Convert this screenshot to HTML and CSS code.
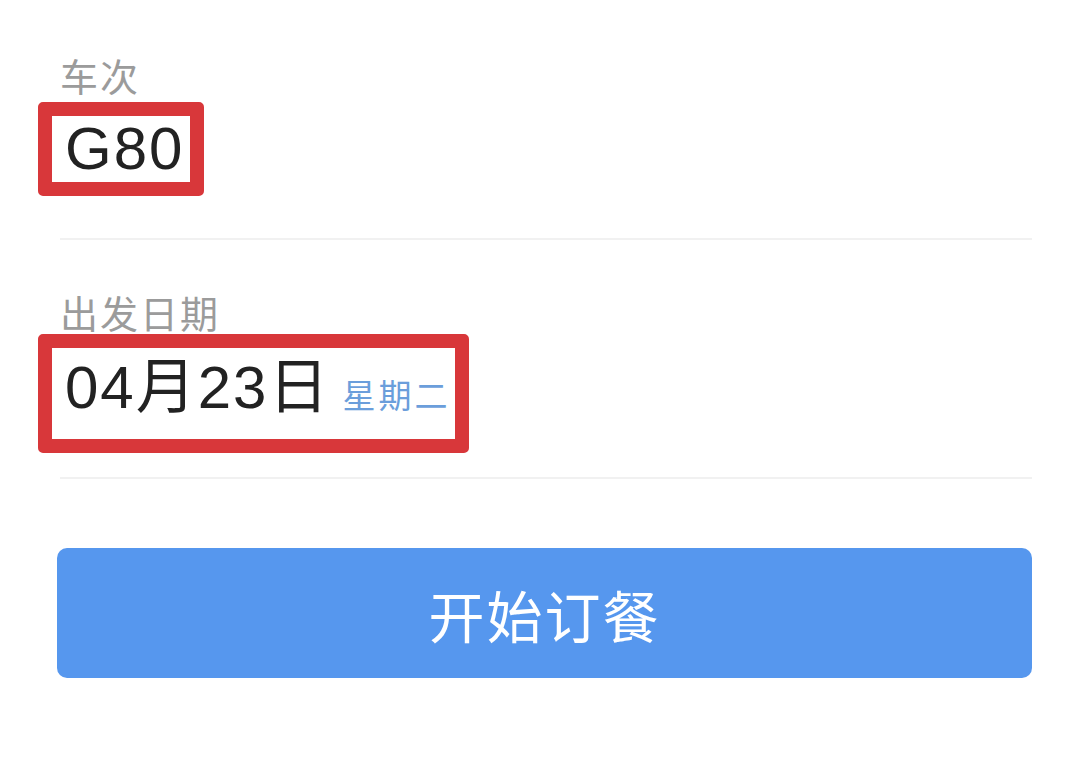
FILE: index.html
```html
<!DOCTYPE html>
<html lang="zh-CN">
<head>
<meta charset="utf-8">
<link rel="stylesheet" href="styles.css">
</head>
<body>
<div class="page">
  <div class="field field-train">
    <div class="label">车次</div>
    <div class="value-box box-train"><span class="value">G80</span></div>
  </div>
  <div class="field field-date">
    <div class="label">出发日期</div>
    <div class="value-box box-date"><span class="value">04月23日</span><span class="weekday">星期二</span></div>
  </div>
  <button class="order-btn">开始订餐</button>
</div>
</body>
</html>
```
FILE: styles.css
```css
html, body {
  margin: 0;
  padding: 0;
  background: #ffffff;
}
body {
  font-family: "Liberation Sans", "Noto Sans CJK SC", sans-serif;
}
.page {
  padding: 53px 48px 0 57px;
}
.field {
  margin-left: 3px;
  border-bottom: 2px solid #f1f1f1;
}
.field-train {
  padding-bottom: 42px;
}
.field-date {
  padding-top: 50px;
  padding-bottom: 24px;
}
.label {
  font-family: "Noto Sans CJK SC", sans-serif;
  font-size: 38px;
  line-height: 44px;
  letter-spacing: 2px;
  color: #9b9b9b;
}
.value-box {
  display: inline-flex;
  align-items: baseline;
  border: 14px solid #d8373a;
  border-radius: 5px;
  margin-left: -22px;
}
.box-train {
  margin-top: 5px;
  padding: 1px 6px 1px 13px;
}
.box-date {
  margin-top: 0;
  padding: 8px 5px 19px 13px;
}
.value {
  font-size: 60px;
  line-height: 64px;
  color: #222222;
  letter-spacing: 2px;
}
.weekday {
  font-family: "Noto Sans CJK SC", sans-serif;
  font-size: 33px;
  line-height: 40px;
  letter-spacing: 3px;
  color: #6b9edb;
  margin-left: 12px;
}
.order-btn {
  display: flex;
  align-items: center;
  justify-content: center;
  width: 100%;
  height: 130px;
  margin-top: 69px;
  border: none;
  border-radius: 10px;
  background: #5697ee;
  color: #ffffff;
  font-family: "Noto Sans CJK SC", sans-serif;
  font-size: 56px;
  letter-spacing: 2px;
  padding: 0;
}
```
